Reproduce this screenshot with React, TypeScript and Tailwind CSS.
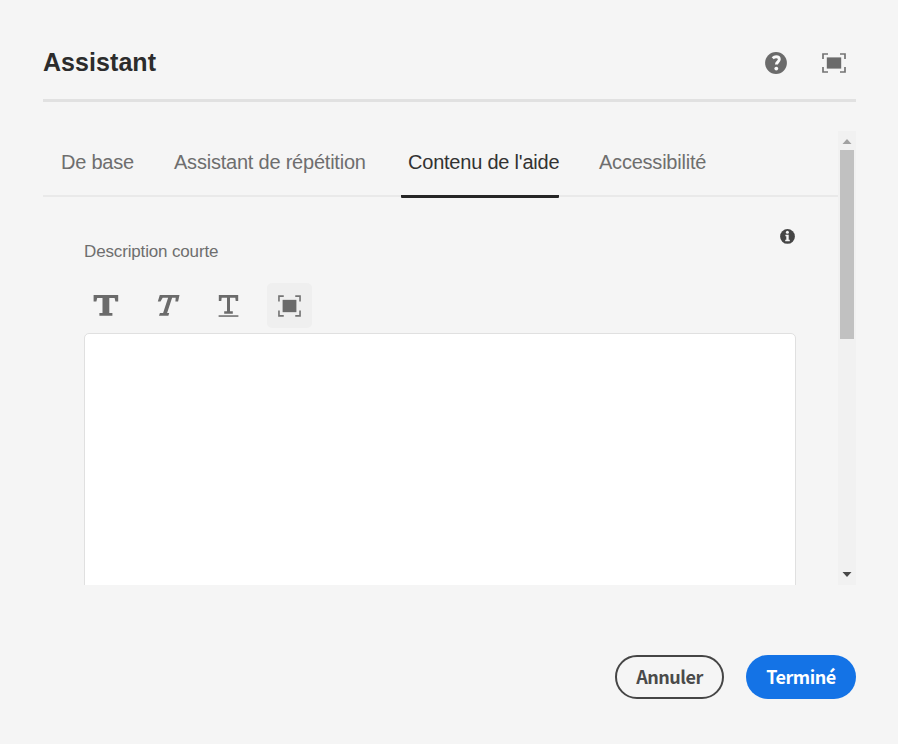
import React from "react";

const tabs = [
  { label: "De base", box: "ml-[18px] w-[73px]", active: false },
  { label: "Assistant de répétition", box: "ml-[40px] w-[192px]", active: false },
  { label: "Contenu de l'aide", box: "ml-[35px] w-[158px] pl-[7px]", active: true },
  { label: "Accessibilité", box: "ml-[40px] w-[108px]", active: false },
];

function HelpIcon() {
  return (
    <svg className="h-[22px] w-[22px]" viewBox="0 0 22 22">
      <circle cx="11" cy="11" r="10.9" fill="#6b6b6b" />
      <path d="M7.7 6.2C8.7 5.2 9.9 4.7 11.2 4.7c2 0 3.1 1.1 3.1 2.6 0 2.5-2.9 2.6-2.9 5.3" fill="none" stroke="#fafafa" strokeWidth="2.9" />
      <circle cx="11.3" cy="16.6" r="1.9" fill="#fafafa" />
    </svg>
  );
}

function FullScreenIcon({ className }: { className: string }) {
  return (
    <svg className={className} viewBox="0 0 24 20" preserveAspectRatio="none">
      <path d="M1 6V1H6M18 1H23V6M23 14V19H18M6 19H1V14" fill="none" stroke="#747474" strokeWidth="1.7" />
      <rect x="4.8" y="4.4" width="14.4" height="11.2" fill="#6b6b6b" />
    </svg>
  );
}

function InfoIcon() {
  return (
    <svg className="h-[15px] w-[15px]" viewBox="0 0 15 15">
      <circle cx="7.5" cy="7.4" r="7.4" fill="#454545" />
      <circle cx="7.4" cy="3.3" r="1.5" fill="#f5f5f5" />
      <path d="M5.4 5.8H8.7V10.8H9.8V12.3H5.2V10.8H6.3V7.3H5.4Z" fill="#f5f5f5" />
    </svg>
  );
}

function BoldIcon() {
  return (
    <svg className="h-[23px] w-[26px]" viewBox="0 0 26 23">
      <path d="M.6 1H25.2V7.6H22.4L21.6 4H16.3V18.9H19.4V21.7H6.4V18.9H9.5V4H4.2L3.4 7.6H.6Z" fill="#6b6b6b" />
    </svg>
  );
}

function ItalicIcon() {
  return (
    <svg className="h-[23px] w-[24px]" viewBox="0 0 24 23">
      <path d="M2.8 1H22.5L21.1 7.6H18.4L18.7 3.8H15.1L10.1 19.1H12.2L11.4 21.7H2L2.9 19.1H6.1L11.1 3.8H5.7L3.5 7.6H.8Z" fill="#6b6b6b" />
    </svg>
  );
}

function UnderlineIcon() {
  return (
    <svg className="h-[24px] w-[22px]" viewBox="0 0 22 24">
      <path d="M.8 1H20.2V7H17.7L17.3 3.7H12V17.2H14.8V19.8H6.2V17.2H9V3.7H3.7L3.3 7H.8Z" fill="#6b6b6b" />
      <rect x=".6" y="21.2" width="19.8" height="1.7" fill="#7b7b7b" />
    </svg>
  );
}

export default function App() {
  return (
    <div className="flex h-[744px] w-[898px] flex-col bg-[#f5f5f5] pl-[43px] pr-[42px] font-['Liberation_Sans',Arial,sans-serif]">
      <header className="flex h-[102px] w-[813px] shrink-0 items-start border-b-[3px] border-[#e1e1e1]">
        <h1 className="mt-[47px] text-[25px] font-bold leading-[30px] tracking-[0.06px] text-[#2c2c2c]">Assistant</h1>
        <button aria-label="Aide" className="ml-auto mt-[52px]"><HelpIcon /></button>
        <button aria-label="Plein écran" className="ml-[35px] mr-[10px] mt-[53px]"><FullScreenIcon className="h-[20px] w-[24px]" /></button>
      </header>

      <div className="mt-[29px] flex h-[454px] w-[813px] shrink-0 overflow-hidden">
        <main className="w-[795px] shrink-0">
          <nav className="flex h-[67px] items-start">
            <div className="flex h-[66px] w-full border-b-2 border-[#e9e9e9]">
              {tabs.map((tab) => (
                <button
                  key={tab.label}
                  className={`${tab.box} h-[67px] shrink-0 whitespace-nowrap text-left text-[20px] leading-[24px] tracking-[-0.22px] ${
                    tab.active ? "rounded-b-[1px] border-b-[3px] border-[#252525] pb-[2px] text-[#323232]" : "pb-[5px] text-[#6e6e6e]"
                  }`}
                >
                  {tab.label}
                </button>
              ))}
            </div>
          </nav>
          <section className="pl-[41px]">
            <div className="flex h-[85px] w-[711px] justify-between">
              <label htmlFor="description" className="mt-[44px] whitespace-nowrap text-[17px] leading-[20px] tracking-[-0.15px] text-[#6e6e6e]">Description courte</label>
              <span className="mt-[31px]"><InfoIcon /></span>
            </div>
            <div className="flex h-[50px] items-start">
              <button aria-label="Gras" className="ml-[9px] mt-[11px]"><BoldIcon /></button>
              <button aria-label="Italique" className="ml-[38px] mt-[11px]"><ItalicIcon /></button>
              <button aria-label="Souligné" className="ml-[37px] mt-[11px]"><UnderlineIcon /></button>
              <button aria-label="Agrandir" className="ml-[27px] flex h-[45px] w-[45px] items-center justify-center rounded-[5px] bg-[#efefef]">
                <FullScreenIcon className="h-[22px] w-[23px]" />
              </button>
            </div>
            <textarea id="description" className="block h-[300px] w-[712px] resize-none rounded-[5px] border border-[#e0e0e0] bg-white outline-none" />
          </section>
        </main>
        <aside className="flex w-[18px] shrink-0 flex-col items-start bg-[#f1f1f1] pl-[1px]">
          <svg className="ml-[3px] mt-[8px] h-[5px] w-[10px]" viewBox="0 0 10 5"><path d="M5 0L9.5 5H.5Z" fill="#a1a1a1" /></svg>
          <div className="ml-[1px] mt-[6px] h-[189px] w-[14px] bg-[#c1c1c1]" />
          <svg className="mb-[8px] ml-[3px] mt-auto h-[5px] w-[10px]" viewBox="0 0 10 5"><path d="M.5 0H9.5L5 5Z" fill="#484848" /></svg>
        </aside>
      </div>

      <footer className="mt-[70px] flex justify-end font-['Noto_Sans_CJK_SC',sans-serif] text-[18px] font-bold leading-[24px] tracking-[-0.5px]">
        <button className="h-[44px] w-[109px] rounded-full border-2 border-[#454545] pb-[2px] text-[#4a4a4a]">Annuler</button>
        <button className="ml-[22px] h-[44px] w-[110px] rounded-full bg-[#1473e6] pb-[2px] text-white">Terminé</button>
      </footer>
    </div>
  );
}
